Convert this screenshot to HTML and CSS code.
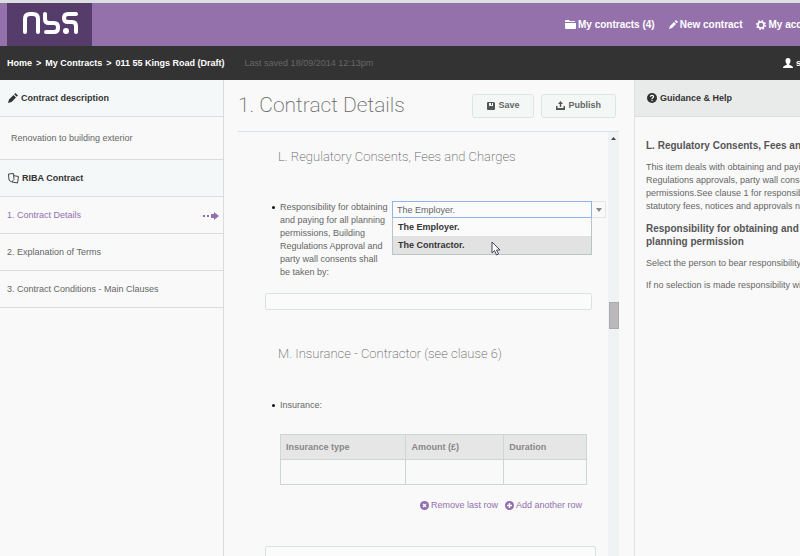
FILE: index.html
```html
<!DOCTYPE html>
<html lang="en">
<head>
  <meta charset="UTF-8" />
  <title>NBS Contracts - Contract Details</title>
  <link rel="stylesheet" href="styles.css">
</head>
<body>

  <header class="header">
    <a class="logo" href="#" aria-label="NBS home">
      <svg width="58" height="24" viewBox="0 0 58 24" fill="none" stroke="#fff" stroke-width="4" stroke-linecap="round" stroke-linejoin="round">
        <path d="M4 21V8q0-5 5-5h3q5 0 5 5v13" />
        <path d="M24 3v5q0 4 4 4h5q4 0 4 4v1q0 4-4 4h-8" />
        <path d="M55 3H47q-4 0-4 4t4 4h4q4 0 4 4v6" />
        <circle cx="45" cy="20" r="3" fill="#fff" stroke="none" />
      </svg>
    </a>
    <nav class="top-nav">
      <a href="#">
        <svg width="11" height="9" viewBox="0 0 11 9" fill="#fff"><path d="M0 2V1q0-1 1-1h3l1 1h5v1zM0 3h11v5q0 1-1 1H1q-1 0-1-1z" /></svg>
        My contracts (4)
      </a>
      <a href="#">
        <svg width="9" height="9" viewBox="0 0 9 9" fill="#fff"><path d="M0 9l1-3 4-4 2 2-4 4zM5.700 1.300L7 0l2 2-1.300 1.300z" /></svg>
        New contract
      </a>
      <a href="#">
        <svg width="10" height="10" viewBox="0 0 10 10" fill="none" stroke="#fff"><circle cx="5" cy="5" r="3" stroke-width="1.600" /><circle cx="5" cy="5" r="4.300" stroke-width="1.400" stroke-dasharray="1.700 1.677" /></svg>
        My account
      </a>
    </nav>
  </header>

  <div class="breadcrumb-bar">
    <nav class="breadcrumb">
      <a href="#">Home</a><span>&gt;</span><a href="#">My Contracts</a><span>&gt;</span><a href="#">011 55 Kings Road (Draft)</a>
    </nav>
    <span class="saved">Last saved 18/09/2014 12:13pm</span>
    <a class="user" href="#">
      <svg width="10" height="10" viewBox="0 0 10 10" fill="#fff"><path d="M5 0q2.500 0 2.500 2.800Q7.500 5 6.200 6v.8L9 8q1 .4 1 2H0q0-1.600 1-2l2.800-1.200V6Q2.500 5 2.500 2.800 2.500 0 5 0z" /></svg>
      sean
    </a>
  </div>

  <div class="columns">
    <aside class="sidebar">
      <h2 class="panel-title">
        <svg width="10" height="10" viewBox="0 0 10 10" fill="#333"><path d="M0 10l1-3.500L5.500 2 8 4.500 3.500 9zM6.200 1.300L7.500 0 10 2.500 8.700 3.800z" /></svg>
        Contract description
      </h2>
      <p class="description">Renovation to building exterior</p>
      <h2 class="panel-title">
        <svg width="11" height="11" viewBox="0 0 11 11" fill="#f9f9f9" stroke="#444"><path d="M5 2.500l5.500 1-1 6.500L4 9z" /><path d="M.5 1l5-.5.5 6L3.500 9 1 7z" /></svg>
        RIBA Contract
      </h2>
      <nav class="sections">
        <a class="active" href="#">1. Contract Details
          <svg width="16" height="8" viewBox="0 0 16 8" fill="#9270ae"><path d="M0 3h2v2H0zM4 3h2v2H4zM8 2h3V0l5 4-5 4V6H8z" /></svg>
        </a>
        <a href="#">2. Explanation of Terms</a>
        <a href="#">3. Contract Conditions - Main Clauses</a>
      </nav>
    </aside>

    <main class="main">
      <div class="title-row">
        <h1>1. Contract Details</h1>
        <button class="btn" type="button">
          <svg width="8" height="8" viewBox="0 0 8 8" fill="#555"><path fill-rule="evenodd" d="M1 0h6l1 1v6q0 1-1 1H1Q0 8 0 7V1q0-1 1-1zM2 1v3h4V1H5v2H4V1z" /></svg>
          Save
        </button>
        <button class="btn" type="button">
          <svg width="9" height="9" viewBox="0 0 9 9" fill="#555"><path d="M4.500 0L7 3H5.200v3H3.800V3H2zM0 5h1.500v2h6V5H9v4H0z" /></svg>
          Publish
        </button>
      </div>

      <div class="scroll-area">
        <form class="content">
          <h2>L. Regulatory Consents, Fees and Charges</h2>
          <ul class="clauses">
            <li>
              <div class="clause">
                <label for="responsibility">Responsibility for obtaining and paying for all planning permissions, Building Regulations Approval and party wall consents shall be taken by:</label>
                <div class="combo">
                  <input id="responsibility" type="text" role="combobox" aria-expanded="true" aria-controls="responsibility-list" value="The Employer.">
                  <button type="button" aria-label="Show options">
                    <svg width="6" height="4" viewBox="0 0 6 4" fill="#888"><path d="M0 0h6L3 4z" /></svg>
                  </button>
                  <ul class="menu" id="responsibility-list" role="listbox">
                    <li role="option" aria-selected="false">The Employer.</li>
                    <li class="hover" role="option" aria-selected="true">The Contractor.
                      <svg class="cursor" width="10" height="15" viewBox="0 0 10 15" fill="#fff" stroke="#445"><path d="M1 1v11l2.500-2.500L5.500 14l2-1-2-4H9z" /></svg>
                    </li>
                  </ul>
                </div>
              </div>
            </li>
          </ul>
          <input class="note" type="text" aria-label="Notes on consents">

          <h2>M. Insurance - Contractor (see clause 6)</h2>
          <ul class="clauses insurance">
            <li>Insurance:</li>
          </ul>
          <table class="grid">
            <thead>
              <tr><th>Insurance type</th><th>Amount (£)</th><th>Duration</th></tr>
            </thead>
            <tbody>
              <tr><td></td><td></td><td></td></tr>
            </tbody>
          </table>
          <div class="row-actions">
            <a href="#">
              <svg width="9" height="9" viewBox="0 0 9 9"><circle cx="4.500" cy="4.500" r="4.500" fill="#9270ae" /><path d="M3 3l3 3M6 3L3 6" stroke="#fff" stroke-width="1.400" /></svg>
              Remove last row
            </a>
            <a href="#">
              <svg width="9" height="9" viewBox="0 0 9 9"><circle cx="4.500" cy="4.500" r="4.500" fill="#9270ae" /><path d="M4.500 2v5M2 4.500h5" stroke="#fff" stroke-width="1.400" /></svg>
              Add another row
            </a>
          </div>
          <textarea class="note-area" aria-label="Notes on insurance"></textarea>
        </form>
        <div class="scrollbar">
          <svg width="5" height="3" viewBox="0 0 5 3" fill="#444"><path d="M0 3h5L2.500 0z" /></svg>
          <div class="thumb"></div>
        </div>
      </div>
    </main>

    <aside class="help">
      <h2 class="panel-title">
        <svg width="10" height="10" viewBox="0 0 10 10"><circle cx="5" cy="5" r="5" fill="#333" /><path d="M3.400 3.700Q3.500 2.300 5 2.300t1.600 1.300Q6.600 4.400 5.800 4.800 5 5.200 5 6M5 6.800V8" fill="none" stroke="#fff" stroke-width="1.200" /></svg>
        Guidance &amp; Help
      </h2>
      <div class="help-text">
        <h3>L. Regulatory Consents, Fees and</h3>
        <p>This item deals with obtaining and paying<br>
          Regulations approvals, party wall consents<br>
          permissions.See clause 1 for responsibility<br>
          statutory fees, notices and approvals not</p>
        <h3>Responsibility for obtaining and<br>planning permission</h3>
        <p>Select the person to bear responsibility.</p>
        <p>If no selection is made responsibility will</p>
      </div>
    </aside>
  </div>

</body>
</html>
```
FILE: styles.css
```css
* {
  box-sizing: border-box;
}
body {
  margin: 0;
  height: 100vh;
  overflow: hidden;
  display: flex;
  flex-direction: column;
  background: #f9f9f9;
  color: #666;
  font-family: "Liberation Sans", Arial, sans-serif;
  font-size: 9px;
  line-height: 13px;
}
h1, h2, h3, p, ul {
  margin: 0;
  padding: 0;
}
a {
  color: inherit;
  text-decoration: none;
}
svg {
  flex-shrink: 0;
}
input, button, textarea {
  font: inherit;
  color: inherit;
}

/* header */
.header {
  display: flex;
  align-items: stretch;
  flex-shrink: 0;
  height: 46px;
  padding-left: 7px;
  border-top: 3px solid #dcdfe2;
  background: #9571ac;
}
.logo {
  display: flex;
  align-items: center;
  justify-content: center;
  width: 85px;
  padding-bottom: 3px;
  background: #553c6b;
}
.top-nav {
  display: flex;
  align-items: center;
  gap: 14px;
  width: 229px;
  margin-left: auto;
  margin-right: 6px;
  color: #fff;
  font-size: 10px;
  font-weight: bold;
  white-space: nowrap;
}
.top-nav a {
  display: flex;
  align-items: center;
  gap: 2px;
}
.breadcrumb-bar {
  display: flex;
  align-items: center;
  flex-shrink: 0;
  height: 34px;
  padding-left: 7px;
  background: #333;
  color: #fff;
  font-weight: bold;
}
.breadcrumb {
  display: flex;
  gap: 4px;
}
.saved {
  margin-left: 20px;
  color: #666;
  font-weight: normal;
}
.user {
  display: flex;
  align-items: center;
  gap: 3px;
  width: 17px;
  margin-left: auto;
}

/* columns */
.columns {
  display: flex;
  flex: 1;
  min-height: 0;
}
.sidebar {
  width: 28%;
  border-right: 1px solid #d8dcdc;
}
.panel-title {
  display: flex;
  align-items: center;
  gap: 3px;
  height: 37px;
  padding-left: 8px;
  border-bottom: 1px solid #d8e0e0;
  background: #f5f8f8;
  color: #333;
  font-size: 9px;
}
.description {
  padding: 15px 11px 14px;
  border-bottom: 1px solid #d8dcdc;
}
.sections a {
  display: flex;
  align-items: center;
  justify-content: space-between;
  height: 37px;
  padding: 1px 4px 0 7px;
  border-bottom: 1px solid #d8dcdc;
}
.sections .active {
  color: #9270ae;
}

/* main */
.main {
  display: flex;
  flex-direction: column;
  flex: 1;
  min-width: 0;
  padding: 0 15px 0 14px;
}
.title-row {
  display: flex;
  align-items: center;
  gap: 7px;
  flex-shrink: 0;
  height: 52px;
  border-bottom: 1px solid #d5e2e6;
}
h1, .content h2 {
  font-family: Roboto, sans-serif;
  font-weight: 200;
  color: #666;
}
h1 {
  margin-right: auto;
  font-size: 21px;
}
.btn {
  display: flex;
  align-items: center;
  justify-content: center;
  gap: 3px;
  height: 24px;
  padding: 0 14px;
  border: 1px solid #dbe6e4;
  border-radius: 3px;
  background: #f3f8f7;
  font-weight: bold;
}
.title-row .btn:last-child {
  margin-right: 3px;
}
.scroll-area {
  display: flex;
  flex: 1;
  min-height: 0;
}
.content {
  flex: 1;
  min-width: 0;
  overflow: hidden;
  padding: 17px 0 0 27px;
}
.content h2 {
  padding-left: 13px;
  font-size: 13px;
  line-height: 16px;
}
.clauses {
  margin-top: 36px;
  padding-left: 15px;
  list-style: none;
}
.clauses > li::before {
  content: "";
  float: left;
  width: 3px;
  height: 3px;
  margin: 5px 0 0 -8px;
  border-radius: 50%;
  background: #111;
}
.clause {
  display: flex;
  align-items: flex-start;
  justify-content: space-between;
}
.clause label {
  width: 109px;
}
.combo {
  display: flex;
  position: relative;
  width: 214px;
  margin-right: 2px;
}
.combo input {
  flex: 1;
  min-width: 0;
  height: 17px;
  padding: 0 4px;
  border: 1px solid #8fb5e8;
  outline: 0;
  background: #fbfbfb;
}
.combo button {
  display: flex;
  align-items: center;
  justify-content: center;
  width: 14px;
  padding: 0;
  border: 1px solid #e2e6e6;
  border-left: 0;
  background: #f9f9f9;
}
.menu {
  position: absolute;
  top: 100%;
  left: 0;
  right: 14px;
  border: 1px solid #b9c4c4;
  border-top: 0;
  background: #fbfbfb;
  color: #333;
  font-weight: bold;
  line-height: 18px;
  list-style: none;
}
.menu li {
  padding-left: 5px;
}
.menu .hover {
  background: #e2e2e2;
}
.cursor {
  position: absolute;
  top: 23px;
  left: 98px;
}
.note, .note-area {
  display: block;
  border: 1px solid #d9e3e3;
  border-radius: 2px;
  background: #fbfbfb;
  resize: none;
}
.note {
  width: calc(100% - 16px);
  height: 17px;
  margin: 14px 0 36px;
}
.insurance {
  margin-top: 37px;
}
.grid {
  width: calc(100% - 36px);
  margin: 22px 0 0 15px;
  border-collapse: collapse;
  table-layout: fixed;
}
.grid th, .grid td {
  height: 25px;
  padding: 0 5px;
  border: 1px solid #ccd6d3;
  text-align: left;
}
.grid th {
  background: #e6e6e6;
  color: #888;
}
.grid th:nth-child(1) {
  width: 41%;
}
.grid th:nth-child(2) {
  width: 32%;
}
.row-actions {
  display: flex;
  justify-content: flex-end;
  gap: 7px;
  margin: 14px 26px 34px 0;
  color: #9270ae;
}
.row-actions a {
  display: flex;
  align-items: center;
  gap: 2px;
}
.note-area {
  width: calc(100% - 12px);
  height: 40px;
}
.scrollbar {
  display: flex;
  flex-direction: column;
  align-items: center;
  width: 11px;
  padding-top: 5px;
  background: #eff3f3;
}
.thumb {
  width: 10px;
  height: 27px;
  margin-top: 162px;
  border: 1px solid #aaa;
  background: #bbb8bb;
}

/* help */
.help {
  width: 166px;
  overflow: hidden;
  border-left: 1px solid #dde2e2;
  white-space: nowrap;
}
.help .panel-title {
  padding-left: 12px;
  background: #e9eaea;
}
.help-text {
  padding: 22px 0 0 11px;
}
.help-text h3 {
  margin-bottom: 9px;
  font-size: 10px;
  line-height: 13px;
  color: #555;
}
.help-text p {
  margin-bottom: 9px;
}
```
